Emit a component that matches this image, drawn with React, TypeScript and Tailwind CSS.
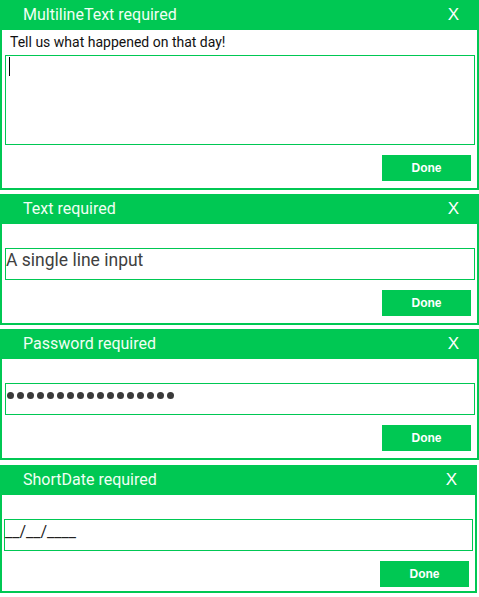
import React from 'react'

type PanelProps = {
  title: string
  height: string
  width?: string
  className?: string
  children: React.ReactNode
}

function Panel({ title, height, width = 'w-[479px]', className = '', children }: PanelProps) {
  return (
    <div className={`${width} ${height} ${className} flex flex-col border-2 border-[#00c853] bg-white`}>
      <div className="-mx-[2px] -mt-[2px] flex h-[30px] shrink-0 items-center justify-between bg-[#00c853] pl-[23px] pr-[20px]">
        <span className="text-[16px] text-[#f0fff4] [font-family:Roboto,sans-serif]">{title}</span>
        <span className="text-[17px] text-white [font-family:'Liberation_Sans',Arial,sans-serif]">X</span>
      </div>
      {children}
    </div>
  )
}

function DoneRow({ bottom = 'mb-[7px]' }: { bottom?: string }) {
  return (
    <div className={`mt-[10px] flex justify-end pr-[6px] ${bottom}`}>
      <button
        type="button"
        className="h-[26px] w-[89px] bg-[#00c853] text-[12px] font-bold text-white [font-family:'Liberation_Sans',Arial,sans-serif]"
      >
        Done
      </button>
    </div>
  )
}

const boxCls = 'ml-[3px] mr-[2px] border border-[#00c853] bg-white'

export default function App() {
  return (
    <div className="flex w-[479px] flex-col bg-white [font-family:Roboto,sans-serif]">
      <Panel title="MultilineText required" height="h-[190px]">
        <div className="h-[25px] pl-[8px] pt-[2px] text-[14px] text-[#111]">Tell us what happened on that day!</div>
        <div className={`${boxCls} h-[90px]`}>
          <div className="ml-[3px] mt-[1px] h-[19px] w-px bg-black" />
        </div>
        <DoneRow />
      </Panel>

      <Panel title="Text required" height="h-[131px]" className="mt-[4px]">
        <div className={`${boxCls} mt-[24px] flex h-[32px] items-center`}>
          <span className="-mt-[8px] text-[17.5px] text-[#404040]">A single line input</span>
        </div>
        <DoneRow />
      </Panel>

      <Panel title="Password required" height="h-[131px]" className="mt-[4px]">
        <div className={`${boxCls} mt-[24px] flex h-[32px] items-center gap-[3px] pl-[1px]`}>
          {Array.from({ length: 17 }).map((_, i) => (
            <span key={i} className="-mt-[8px] h-[7px] w-[7px] rounded-full bg-[#3a3a3a]" />
          ))}
        </div>
        <DoneRow />
      </Panel>

      <Panel title="ShortDate required" height="h-[128px]" width="w-[477px]" className="mt-[5px]">
        <div className="ml-[2px] mr-[2px] mt-[24px] flex h-[32px] items-center border border-[#00c853]">
          <span className="-mt-[6px] text-[16px] text-[#222]">__/__/____</span>
        </div>
        <DoneRow bottom="mb-[4px]" />
      </Panel>
    </div>
  )
}
